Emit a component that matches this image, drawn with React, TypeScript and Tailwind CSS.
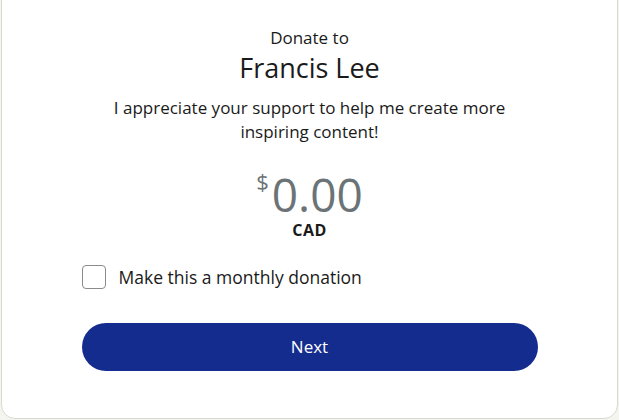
import React, { useState } from "react";

export default function App() {
  const [monthly, setMonthly] = useState(false);

  return (
    <div className="w-[619px] h-[420px] bg-[#f5f5f0] overflow-hidden" style={{ fontFamily: "'Open Sans', 'Noto Sans', sans-serif" }}>
      <div className="ml-px mr-px mt-[-12px] h-[431px] bg-white border border-[#d9d9d2] rounded-b-[14px] flex flex-col items-center text-[#1a1a1a]">
        <div className="mt-[38px] text-[17px] leading-[22px]">Donate to</div>
        <div className="mt-[2px] text-[27px] leading-[34px]">Francis Lee</div>
        <p className="mt-[11px] w-[410px] text-center text-[17px] leading-[24px]">
          I appreciate your support to help me create more inspiring content!
        </p>

        <div className="mt-[28px] flex items-start text-[#6b7376]">
          <span className="text-[22px] leading-[22px] mt-[-2px] mr-[3px]">$</span>
          <span className="text-[46px] leading-[44px]">0.00</span>
        </div>
        <div className="mt-[5px] text-[16px] leading-[18px] font-bold tracking-[0.4px]">CAD</div>

        <div className="w-[456px] mt-[26px]">
          <label className="flex items-center gap-[13px] cursor-pointer">
            <input
              type="checkbox"
              checked={monthly}
              onChange={() => setMonthly(!monthly)}
              className="appearance-none w-[24px] h-[24px] rounded-[4px] border border-[#8a8a8a] bg-white"
            />
            <span className="text-[17.5px] leading-[24px]">Make this a monthly donation</span>
          </label>

          <button className="mt-[34px] w-full h-[48px] rounded-full bg-[#142c8e] text-white text-[17px]">
            Next
          </button>
        </div>
      </div>
    </div>
  );
}
